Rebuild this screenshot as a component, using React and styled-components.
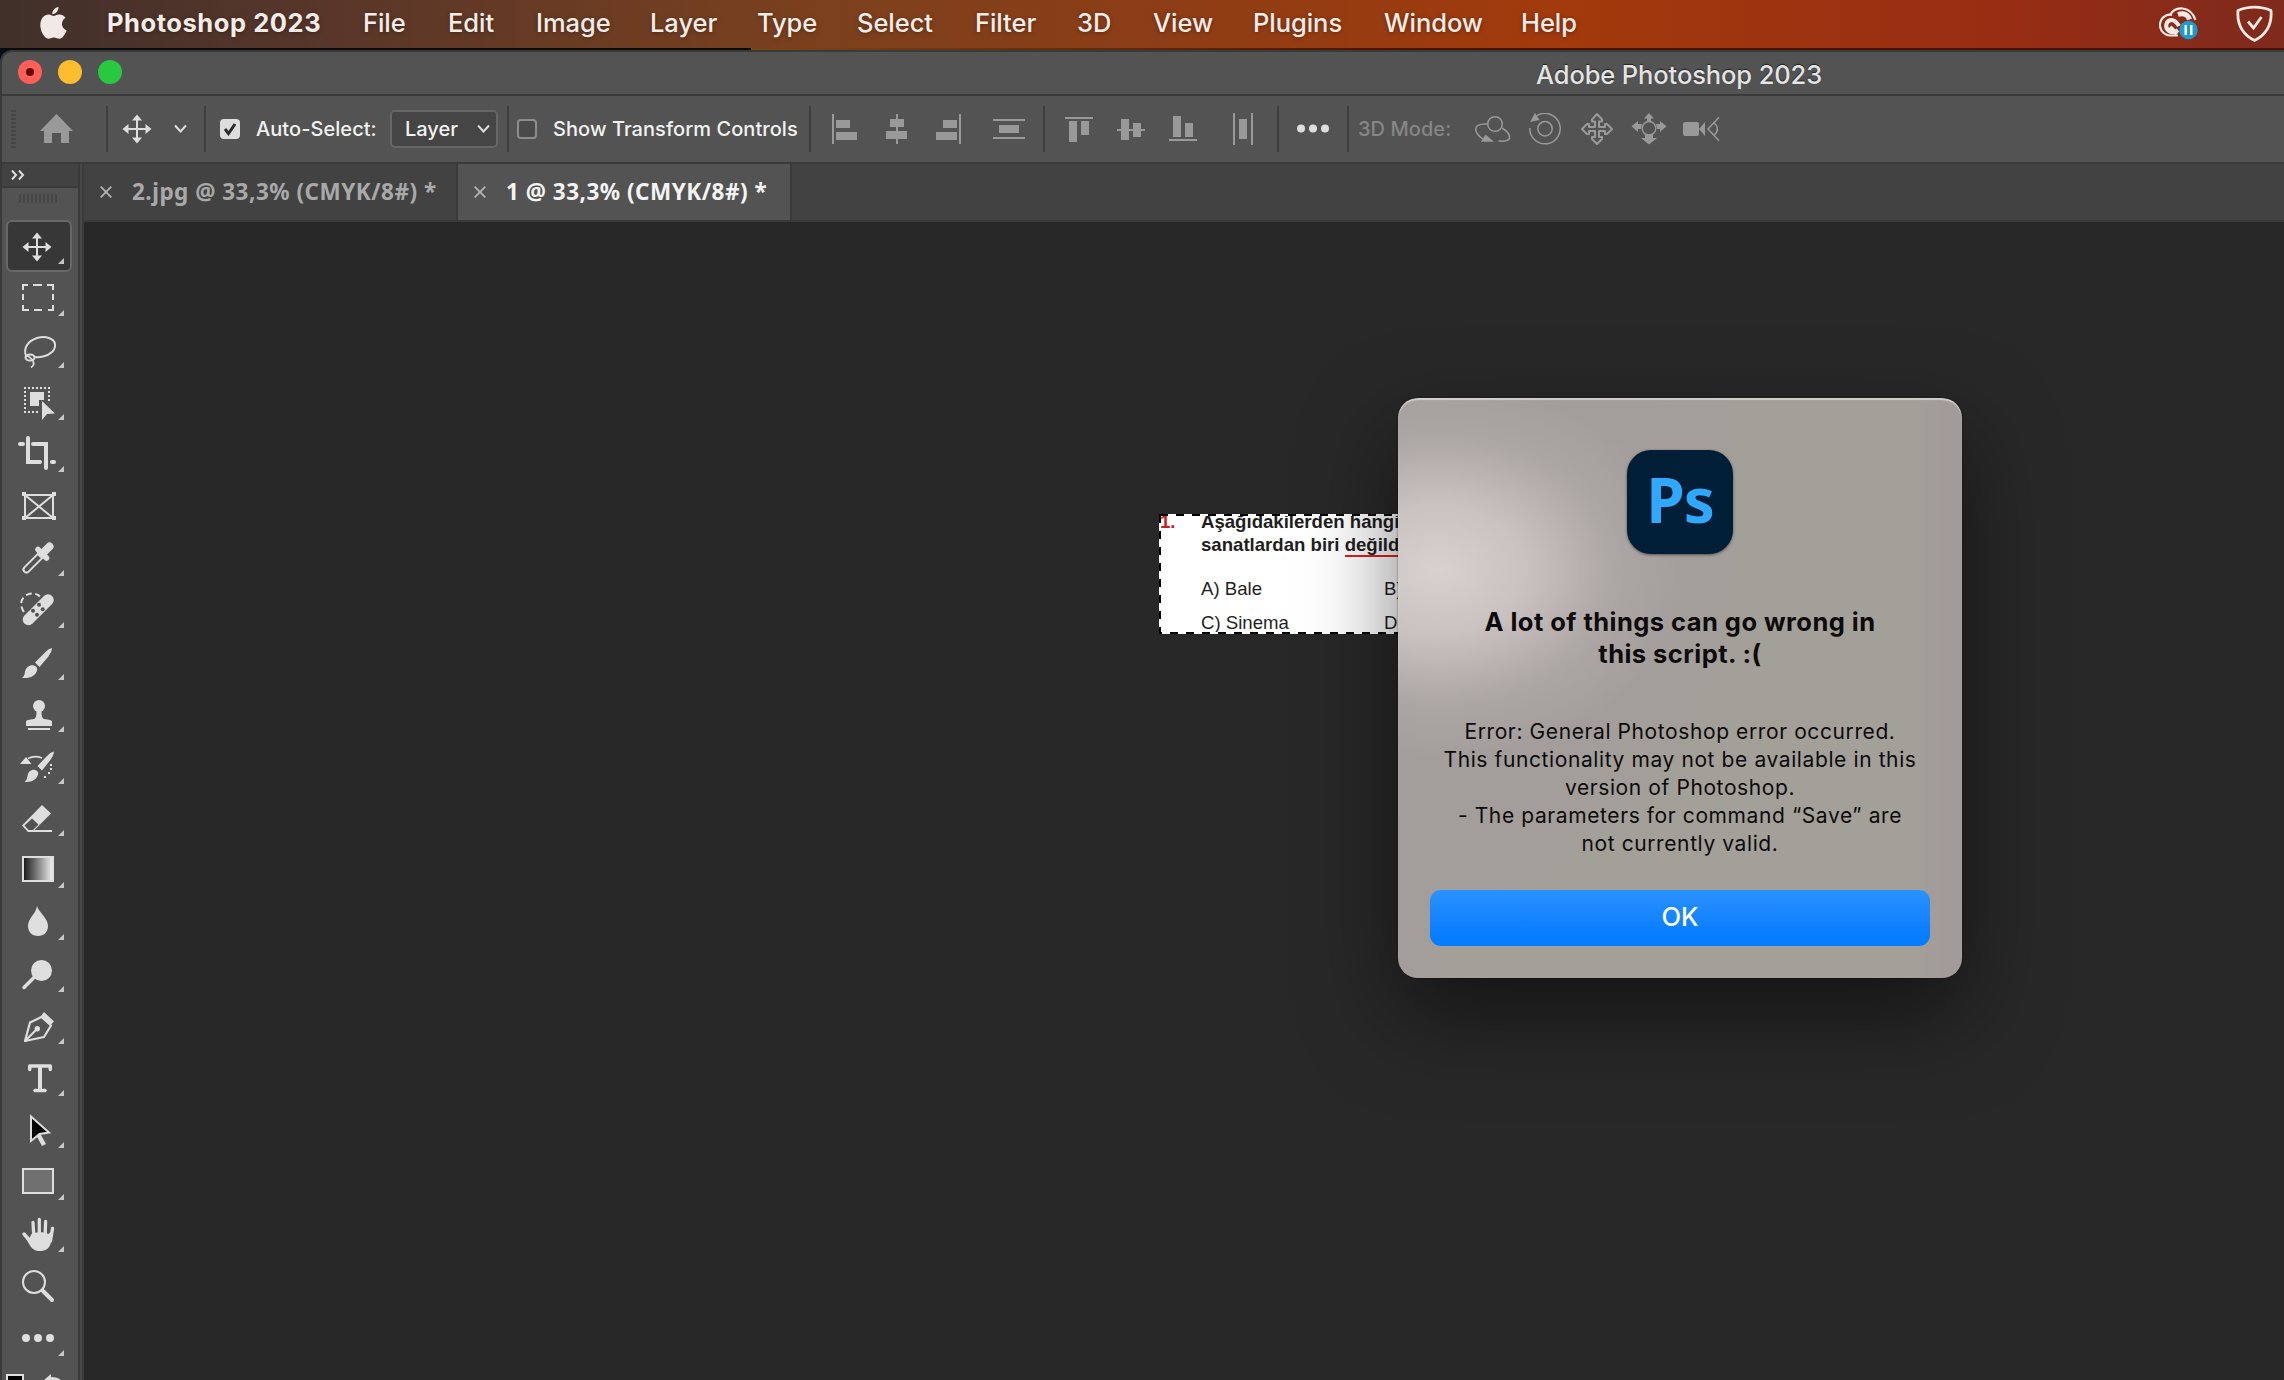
import styled, {createGlobalStyle} from 'styled-components';

const menuItems = [
  {label: 'Photoshop 2023', width: 214, bold: true},
  {label: 'File', width: 43},
  {label: 'Edit', width: 46},
  {label: 'Image', width: 72},
  {label: 'Layer', width: 65},
  {label: 'Type', width: 58},
  {label: 'Select', width: 76},
  {label: 'Filter', width: 60},
  {label: '3D', width: 34},
  {label: 'View', width: 58},
  {label: 'Plugins', width: 89},
  {label: 'Window', width: 95},
  {label: 'Help', width: 56},
];

const light = '#dedede';
const panel = '#535353';

const tools = [
  {
    name: 'move',
    active: true,
    icon: (
      <g>
        <path d="M37 16v22M26 27h22" stroke={light} strokeWidth="2" />
        <path d="M37 12.5l5 6H32zM37 41.5l5-6H32zM22.5 27l6-5v10zM51.5 27l-6-5v10z" fill={light} />
      </g>
    ),
  },
  {
    name: 'marquee',
    icon: (
      <path
        d="M23 18v-5h5M33 13h9M47 13h6v5M53 22v6M53 33v5h-5M42 38h-8M29 38h-6v-5M23 28v-6"
        fill="none"
        stroke={light}
        strokeWidth="2"
      />
    ),
  },
  {
    name: 'lasso',
    icon: (
      <g fill="none" stroke={light} strokeWidth="2">
        <path d="M26 32c-3-8 2-15 11-18 9-2.500 17 .5 18 6 1 6-5 11-12 12.500-3 .7-6 .8-8 .5" />
        <ellipse cx="30" cy="33.500" rx="4.500" ry="3" />
        <path d="M26 32c3 0 5 2 7 5 1.500 3 .5 5-2 6.500" strokeWidth="1.700" />
      </g>
    ),
  },
  {
    name: 'object-select',
    icon: (
      <g fill={light}>
        <path d="M24 12h27M24 36h16M25 15v20M49 15v12" stroke={light} strokeWidth="2" strokeDasharray="2 2" />
        <path d="M30 16h14v8l-5 0v6h-9z" />
        <path d="M42 25v19l5-6 8-.5z" />
      </g>
    ),
  },
  {
    name: 'crop',
    icon: (
      <g fill="none" stroke={light} strokeWidth="4" strokeLinecap="round">
        <path d="M20 16h3M28 10v24h12M33 16h13v24" />
        <path d="M52 34h2" />
      </g>
    ),
  },
  {
    name: 'frame',
    flat: true,
    icon: (
      <g stroke={light} strokeWidth="2" fill="none">
        <path d="M25 15h28v23H25zM25 15l28 23M53 15L25 38" />
        <path d="M22 12h4v4h-4zM52 12h4v4h-4zM22 36h4v4h-4zM52 36h4v4h-4z" fill={light} stroke="none" />
      </g>
    ),
  },
  {
    name: 'eyedropper',
    icon: (
      <g fill="none" strokeLinecap="round">
        <path d="M26.500 37.500L40 24" stroke={light} strokeWidth="8" />
        <path d="M26.500 37.500L40 24" stroke={panel} strokeWidth="4" />
        <path d="M42 22l7.500-7.500" stroke={light} strokeWidth="8" />
        <path d="M38 17.500l8.500 8.500" stroke={light} strokeWidth="5.500" />
      </g>
    ),
  },
  {
    name: 'healing',
    icon: (
      <g>
        <path d="M28.500 35.500L48 16" stroke={light} strokeWidth="11.500" strokeLinecap="round" />
        <path
          d="M24 28c-6-8-2-18 8-18.500 3 0 6 1 8 3"
          fill="none"
          stroke={light}
          strokeWidth="2"
          strokeDasharray="6 3.500"
        />
        <g fill={panel}>
          <circle cx="33" cy="26.700" r="2" />
          <circle cx="39" cy="20.700" r="2" />
          <circle cx="42.700" cy="25.200" r="2" />
          <circle cx="37" cy="30.700" r="2" />
        </g>
      </g>
    ),
  },
  {
    name: 'brush',
    icon: (
      <path
        d="M52 12c0 3-2 6-4 9l-8.500 10-4.500-4.500 9-9c3-3 5-5 8-5.500zM34 29.500c3 .8 4 3.500 2.500 6.500-2.500 5-8 6.500-14.500 6 2-1.500 2.500-3 3-6 .8-5 5-7.500 9-6.500z"
        fill={light}
      />
    ),
  },
  {
    name: 'stamp',
    icon: (
      <g fill={light}>
        <circle cx="39" cy="18" r="6" />
        <path d="M36.500 22h5c0 4 0 8 2.500 9 5 .5 8 1 8 3v4H26v-4c0-2 3-2.500 8-3 2.500-1 2.500-5 2.500-9z" />
        <path d="M28 40h22v2H28z" />
      </g>
    ),
  },
  {
    name: 'history-brush',
    icon: (
      <g fill={light}>
        <path d="M54 11.500c0 3-2 6-4 9l-8 10-4.500-4.500 8.500-9c3-3 5-5 8-5.500zM35 30c3 .5 4 3.500 2.500 6-2.500 5-7 6-13 6 2-1.500 2.500-3 3-6 .8-4.500 4-6.800 7.500-6z" />
        <path d="M20 24h11.500l-5.500-7z" />
        <path d="M28 18.500c4-2 9-2.500 14-.5" fill="none" stroke={light} strokeWidth="1.700" />
        <path d="M50 24h2v2h-2zM50 28h2v2h-2zM48 32h2v2h-2zM44 36h2v2h-2z" />
      </g>
    ),
  },
  {
    name: 'eraser',
    icon: (
      <g>
        <path d="M42 13l9 8.500L34.500 38H52v2H28l-6-6.500z" fill={light} />
        <path d="M32 26.500l6.500 6-5.500 5.500h-4.500l-4-4.500z" fill={panel} />
      </g>
    ),
  },
  {
    name: 'gradient',
    icon: (
      <g>
        <defs>
          <linearGradient id="ramp">
            <stop offset="0" stopColor="#151515" />
            <stop offset="1" stopColor="#f2f2f2" />
          </linearGradient>
        </defs>
        <rect x="23" y="13" width="30" height="24" fill="url(#ramp)" stroke={light} strokeWidth="2" />
      </g>
    ),
  },
  {
    name: 'blur',
    icon: <path d="M37 10c1.500 6 11 12 11 20 0 6-4 10-10 10s-10-4-10-10c0-8 8-12 9-20z" fill={light} />,
  },
  {
    name: 'dodge',
    icon: (
      <g>
        <circle cx="41.500" cy="22.500" r="10.500" fill={light} />
        <path d="M24 39.500l12-12" stroke={light} strokeWidth="3.500" strokeLinecap="round" />
      </g>
    ),
  },
  {
    name: 'pen',
    icon: (
      <g fill="none" stroke={light} strokeWidth="2.200" strokeLinejoin="round">
        <path d="M25 41l5-18.500L41.500 17l9.500 8.500L44 37z" />
        <path d="M25 41l12-12" />
        <circle cx="37.300" cy="28.700" r="2.700" fill={light} stroke="none" />
        <path d="M44 12l10 9.500-4 4L40.500 16.500z" fill={light} stroke="none" />
      </g>
    ),
  },
  {
    name: 'type',
    icon: (
      <g fill="none" stroke={light} strokeWidth="4" strokeLinecap="round" strokeLinejoin="round">
        <path d="M29.700 17.500V14h20.600v3.500" strokeWidth="3.500" />
        <path d="M40 14v24" strokeLinecap="butt" />
        <path d="M35 38.500h10" strokeWidth="3.500" />
      </g>
    ),
  },
  {
    name: 'path-select',
    icon: (
      <g>
        <path d="M38.500 31l5.500 10" stroke={light} strokeWidth="4.500" />
        <path d="M31 12.500L49 28.500l-9.500 1.500L31 37z" fill="#000" stroke={light} strokeWidth="2" />
      </g>
    ),
  },
  {
    name: 'rectangle',
    icon: <rect x="23" y="13" width="30" height="24" fill="#707070" stroke={light} strokeWidth="2" />,
  },
  {
    name: 'hand',
    icon: (
      <g stroke={light} strokeLinecap="round" fill="none">
        <path d="M33 14.500l1 17M39.300 11.500V30M45.600 13.500L45 31M52.500 20.500L50.500 33" strokeWidth="3.300" />
        <path d="M24 26l7 8" strokeWidth="3.500" />
        <path
          d="M31.500 26c5-2.500 12-2.500 17 0l4-4c0 6-.5 10-2 14-1.500 4.500-5 7-10.500 7-5 0-8-2-10-5.500L25 29l4 2z"
          fill={light}
          stroke="none"
        />
      </g>
    ),
  },
  {
    name: 'zoom',
    flat: true,
    icon: (
      <g fill="none" stroke={light}>
        <circle cx="34" cy="22" r="11" strokeWidth="2" />
        <path d="M42.500 30.500l9.500 9.500" strokeWidth="4" strokeLinecap="round" />
      </g>
    ),
  },
  {
    name: 'more',
    icon: (
      <g fill={light}>
        <circle cx="26" cy="26" r="4" />
        <circle cx="38" cy="26" r="4" />
        <circle cx="50" cy="26" r="4" />
      </g>
    ),
  },
];

const alignIcons = {
  left: {gap: 21, width: 26, d: 'M0 1h2v30H0zM4 7h14v8H4zM4 19h21v8H4z'},
  centerH: {gap: 28, width: 21, d: 'M10 1h2v30h-2zM4 6h14v8H4zM0 18h21v8H0z'},
  right: {gap: 29, width: 25, d: 'M23 1h2v30h-2zM7 7h14v8H7zM0 19h21v8H0z'},
  distributeV: {gap: 32, width: 32, d: 'M0 6h32v2H0zM6 12h20v8H6zM0 24h32v2H0z'},
  top: {gap: 20, width: 28, d: 'M0 4h28v2H0zM4 8h8v21H4zM16 8h8v14h-8z'},
  middle: {gap: 24, width: 28, d: 'M0 16h28v2H0zM4 6h8v21H4zM16 10h8v14h-8z'},
  bottom: {gap: 24, width: 28, d: 'M0 26h28v2H0zM4 3h8v21H4zM16 10h8v14h-8z'},
  distributeH: {gap: 36, width: 20, d: 'M0 0h2v32H0zM6 6h8v20H6zM18 0h2v32h-2z'},
};

const modeIcons = [
  {
    name: 'orbit',
    gap: 24,
    width: 38,
    icon: (
      <g>
        <circle cx="21" cy="11" r="7.300" />
        <path d="M13.500 11C5 10.500.5 13 2 18c1 3.500 4 6 7 8M28 15c5 3 8 6.500 7.500 10-.5 2.500-5 3.500-11 3" />
        <path d="M7 28.700L11.500 21.500 20 28.700z" fill="#999" stroke="none" />
      </g>
    ),
  },
  {
    name: 'roll',
    gap: 17,
    width: 34,
    icon: (
      <g>
        <path d="M.8 15A15.200 15.200 0 1 0 8 2.700" />
        <circle cx="16" cy="15.700" r="7.200" />
        <path d="M6 0l4.500 7-9.500 2z" fill="#999" stroke="none" />
      </g>
    ),
  },
  {
    name: 'pan',
    gap: 18,
    width: 32,
    icon: (
      <path
        d="M16 1l5 5.500v2h-3V14h6v-3h2l5 5-5 5h-2v-3h-6v6h3v2l-5 5-5-5v-2h3v-6H8v3H6l-5-5 5-5h2v3h6V8.500h-3v-2z"
        strokeWidth="2"
        strokeLinejoin="round"
      />
    ),
  },
  {
    name: 'slide',
    gap: 18,
    width: 36,
    icon: (
      <g>
        <circle cx="18" cy="15.300" r="6.800" />
        <path
          d="M18 0l5 5.500h-3V8h-4V5.500h-3zM.5 13.300L7 8v3h4l-1 5H7v3zM35.500 13.300L29 8v3h-4l1 5h3v3zM18 31.500L10 25h4v-3.500h8V25h4z"
          fill="#999"
          stroke="none"
        />
      </g>
    ),
  },
  {
    name: 'camera',
    gap: 16,
    width: 37,
    icon: (
      <g>
        <rect x="0" y="9" width="16" height="14" rx="2" fill="#999" stroke="none" />
        <path d="M16 16l6-7v14z" fill="#999" stroke="none" />
        <path d="M36 4.300L25 16l11 11.700M31 10c4.500 3 4.500 9 0 12" />
      </g>
    ),
  },
];

const errorLines = [
  'Error: General Photoshop error occurred.',
  'This functionality may not be available in this',
  'version of Photoshop.',
  '- The parameters for command “Save” are',
  'not currently valid.',
];

function AlignIcon({type}) {
  const {gap, width, d} = alignIcons[type];
  return (
    <OptionIcon $gap={gap} width={width} height="32" viewBox={`0 0 ${width} 32`}>
      <path d={d} fill="#999" />
    </OptionIcon>
  );
}

function Chevron({gap}) {
  return (
    <OptionIcon $gap={gap} width="13" height="10" viewBox="0 0 13 10">
      <path d="M1 1.500l5.500 6 5.500-6" fill="none" stroke={light} strokeWidth="2" />
    </OptionIcon>
  );
}

function OptionsBar() {
  return (
    <StyledOptions>
      <Gripper />
      <OptionIcon $gap={24} width="33" height="30" viewBox="0 0 33 30">
        <path d="M16.500 0L33 17h-4v12h-8V19h-9v10H4V17H0z" fill="#999" />
      </OptionIcon>
      <Separator $gap={33} />
      <OptionIcon $gap={14} width="30" height="30" viewBox="0 0 30 30">
        <path d="M15 4v22M4 15h22" stroke={light} strokeWidth="2" />
        <path d="M15 .5l5 6H10zM15 29.500l5-6H10zM.5 15l6-5v10zM29.500 15l-6-5v10z" fill={light} />
      </OptionIcon>
      <Chevron gap={22} />
      <Separator $gap={17} />
      <Checkbox $gap={14} $checked>
        <svg width="14" height="14" viewBox="0 0 14 14">
          <path d="M2 7l3.500 4.500L12 2" fill="none" stroke="#2b2b2b" strokeWidth="3" />
        </svg>
      </Checkbox>
      <OptionLabel $gap={16} $width={121}>
        Auto-Select:
      </OptionLabel>
      <LayerSelect>
        <span>Layer</span>
        <Chevron gap={0} />
      </LayerSelect>
      <Separator $gap={9} />
      <Checkbox $gap={8} />
      <OptionLabel $gap={16} $width={244}>
        Show Transform Controls
      </OptionLabel>
      <Separator $gap={12} />
      <AlignIcon type="left" />
      <AlignIcon type="centerH" />
      <AlignIcon type="right" />
      <AlignIcon type="distributeV" />
      <Separator $gap={18} />
      <AlignIcon type="top" />
      <AlignIcon type="middle" />
      <AlignIcon type="bottom" />
      <AlignIcon type="distributeH" />
      <Separator $gap={24} />
      <OptionIcon $gap={18} width="32" height="10" viewBox="0 0 32 10">
        <g fill={light}>
          <circle cx="4" cy="4.500" r="4" />
          <circle cx="16" cy="4.500" r="4" />
          <circle cx="28" cy="4.500" r="4" />
        </g>
      </OptionIcon>
      <Separator $gap={18} />
      <OptionLabel $gap={9} $width={92} $muted>
        3D Mode:
      </OptionLabel>
      {modeIcons.map(({name, gap, width, icon}) => (
        <OptionIcon key={name} $gap={gap} width={width} height="32" viewBox={`0 0 ${width} 32`}>
          <g fill="none" stroke="#999" strokeWidth="1.500">
            {icon}
          </g>
        </OptionIcon>
      ))}
    </StyledOptions>
  );
}

function MenuBar() {
  return (
    <StyledMenuBar>
      <AppleLogo width="27" height="32" viewBox="0 0 27 32">
        <path
          d="M18.500 0c.3 3.500-2.700 7.300-6.200 7.200C12 3.800 15 .3 18.500 0zM13.500 9c1.300 0 3-1.500 5.800-1.500 2.400 0 4.800 1.200 6.300 3.300-5.300 3-4.500 10.500 1 12.600-1.300 3.700-4.300 8.300-7.200 8.300-2.200 0-3-1.300-5.600-1.300-2.700 0-3.600 1.300-5.600 1.300C4.700 31.700.3 24.500.3 18.300.3 11.600 4.500 7.600 8.600 7.600c2.300 0 3.700 1.400 4.900 1.400z"
          fill="#f0e9e6"
        />
      </AppleLogo>
      {menuItems.map(({label, width, bold}) => (
        <MenuItem key={label} $width={width} $bold={bold}>
          {label}
        </MenuItem>
      ))}
      <StatusIcons>
        <svg width="40" height="34" viewBox="0 0 40 34">
          <g fill="none" stroke="#fbe9e4">
            <path d="M20 29.500H12A10.500 10.500 0 0 1 8 9.500c2-1 4-1 6-.5M12 9C17 0 32-1 37.500 14" strokeWidth="2.200" />
            <path d="M20 24c-3 2.500-6 3-9 1-4.500-3-3.500-10 2-11 4-.5 6 3 8 6M19 28l-7-7" strokeWidth="4" />
            <path d="M20 8.500c6-2 10 .5 11.500 5" strokeWidth="5" />
          </g>
          <circle cx="30.500" cy="24" r="9.200" fill="#1b9ccf" />
          <path d="M26.500 19h2.500v10h-2.500zM32 19h2.500v10H32z" fill="#fff" />
        </svg>
        <svg width="37" height="37" viewBox="0 0 37 37">
          <path
            d="M2 5.500C12 1 25 1 35 5.500c1 12-3 23-16.500 30C5 28.500 1 17.500 2 5.500z"
            fill="none"
            stroke="#fbe9e4"
            strokeWidth="2.800"
            strokeLinejoin="round"
          />
          <path d="M12 16.500l5.500 6.500 8-11" fill="none" stroke="#fbe9e4" strokeWidth="2.800" />
        </svg>
      </StatusIcons>
    </StyledMenuBar>
  );
}

function Toolbar() {
  return (
    <StyledToolbar>
      <ToolbarHeader>
        <svg width="14" height="10" viewBox="0 0 14 10">
          <path d="M1 .5L5 5 1 9.500M8 .5L12 5 8 9.500" fill="none" stroke={light} strokeWidth="2" />
        </svg>
      </ToolbarHeader>
      <ToolbarGrip />
      {tools.map(({name, icon, active, flat}) => (
        <Tool key={name} $active={active}>
          <svg width="76" height="52" viewBox="2 0 76 52">
            {icon}
            {!flat && <path d="M64 38v6h-6z" fill="#c8c8c8" />}
          </svg>
        </Tool>
      ))}
      <Swatches>
        <Swatch />
        <svg width="18" height="8" viewBox="0 0 18 8">
          <path d="M0 6l7-6v3c6 0 10 2 11 5H7z" fill={light} />
        </svg>
      </Swatches>
    </StyledToolbar>
  );
}

function CloseIcon() {
  return (
    <svg width="12" height="12" viewBox="0 0 12 12">
      <path d="M.7.7l10.600 10.600M11.300.7L.7 11.300" stroke="#b4b4b4" strokeWidth="1.800" />
    </svg>
  );
}

function Document() {
  return (
    <StyledDocument>
      <QuestionNumber>1.</QuestionNumber>
      <Question>
        Aşağıdakilerden hangi
        <br />
        sanatlardan biri <u>değildir?</u>
      </Question>
      <Answers>
        <span>A) Bale</span>
        <span>B)</span>
        <span>C) Sinema</span>
        <span>D)</span>
      </Answers>
      <Ants viewBox="0 0 560 120" width="560" height="120">
        <rect x="1" y="1" width="558" height="118" />
        <rect x="1" y="1" width="558" height="118" strokeDasharray="8 8" />
      </Ants>
    </StyledDocument>
  );
}

function ErrorDialog() {
  return (
    <StyledDialog role="alertdialog">
      <AppIcon>Ps</AppIcon>
      <DialogTitle>
        A lot of things can go wrong in
        <br />
        this script. :(
      </DialogTitle>
      <DialogText>
        {errorLines.map(line => (
          <p key={line}>{line}</p>
        ))}
      </DialogText>
      <OkButton>OK</OkButton>
    </StyledDialog>
  );
}

export default function App() {
  return (
    <Screen>
      <GlobalStyle />
      <MenuBar />
      <AppWindow>
        <TitleBar>
          <TrafficLight $color="#ff5f57">
            <i />
          </TrafficLight>
          <TrafficLight $color="#febc2e" />
          <TrafficLight $color="#28c840" />
          <WindowTitle>Adobe Photoshop 2023</WindowTitle>
        </TitleBar>
        <OptionsBar />
        <Workspace>
          <Toolbar />
          <Main>
            <Tabs>
              <Tab $width={374}>
                <CloseIcon />
                <span>2.jpg @ 33,3% (CMYK/8#) *</span>
              </Tab>
              <Tab $width={334} $active>
                <CloseIcon />
                <span>1 @ 33,3% (CMYK/8#) *</span>
              </Tab>
            </Tabs>
            <Canvas>
              <Document />
            </Canvas>
          </Main>
        </Workspace>
      </AppWindow>
      <ErrorDialog />
    </Screen>
  );
}

const GlobalStyle = createGlobalStyle`
  *,
  *::before {
    box-sizing: border-box;
  }
  body {
    margin: 0;
    background: #282828;
    font-family: Inter, 'Liberation Sans', sans-serif;
  }
  svg {
    display: block;
    flex: none;
  }
`;

const Screen = styled.div`
  position: relative;
  display: flex;
  flex-direction: column;
  width: 2284px;
  height: 1380px;
  overflow: hidden;
  background: #04101c;
`;

const StyledMenuBar = styled.nav`
  display: flex;
  align-items: center;
  flex: none;
  height: 50px;
  padding: 0 11px 2px 40px;
  background: linear-gradient(90deg, #40302a 0, #55352a 280px, #7a401e 800px, #a23a0c 1560px, #982d13 2000px, #7e2a1d 2284px);
  border-bottom: 2px solid;
  border-image: linear-gradient(90deg, #0a0a0c 751px, #7a4513 751px, #4d1206 1400px, #4a0f08) 1;
`;

const AppleLogo = styled.svg`
  margin-right: 40px;
`;

const MenuItem = styled.span`
  flex: none;
  width: ${({$width}) => $width}px;
  margin-right: 42px;
  color: #f6ece8;
  font-size: 25.5px;
  font-weight: ${({$bold}) => ($bold ? 700 : 500)};
  letter-spacing: ${({$bold}) => ($bold ? 0.55 : -0.05)}px;
  line-height: 44px;
  white-space: nowrap;
  text-shadow: 0 1px 4px rgba(0, 0, 0, 0.35);
`;

const StatusIcons = styled.div`
  display: flex;
  align-items: center;
  gap: 38px;
  margin-left: auto;
`;

const AppWindow = styled.div`
  display: flex;
  flex-direction: column;
  flex: 1;
  min-height: 0;
  border: 2px solid #3a3a3a;
  border-width: 2px 0 0 2px;
  border-top-left-radius: 12px;
  overflow: hidden;
  background: #3a3a3a;
`;

const TitleBar = styled.header`
  display: flex;
  align-items: center;
  gap: 16px;
  height: 44px;
  padding: 0 0 3px 16px;
  background: ${panel};
  border-bottom: 2px solid #3a3a3a;
`;

const TrafficLight = styled.span`
  display: grid;
  place-items: center;
  width: 24px;
  height: 24px;
  border-radius: 50%;
  background: ${({$color}) => $color};
  i {
    width: 8px;
    height: 8px;
    border-radius: 50%;
    background: #6b0200;
  }
`;

const WindowTitle = styled.span`
  margin: 6px 0 0 1398px;
  color: #e4e4e4;
  font-size: 25.5px;
  font-weight: 500;
  letter-spacing: -0.12px;
  white-space: nowrap;
  text-shadow: 0 -1px 1px rgba(0, 0, 0, 0.6);
`;

const StyledOptions = styled.div`
  display: flex;
  align-items: center;
  height: 68px;
  background: ${panel};
  border-bottom: 2px solid #3a3a3a;
`;

const Gripper = styled.span`
  width: 5px;
  height: 38px;
  margin-left: 9px;
  background: repeating-linear-gradient(#464646 0 2px, transparent 2px 4px);
`;

const OptionIcon = styled.svg`
  margin-left: ${({$gap}) => $gap}px;
`;

const Separator = styled.span`
  width: 2px;
  height: 46px;
  margin-left: ${({$gap}) => $gap}px;
  background: #3e3e3e;
`;

const Checkbox = styled.span`
  display: grid;
  place-items: center;
  width: 20px;
  height: 20px;
  margin-left: ${({$gap}) => $gap}px;
  border: 2px solid ${({$checked}) => ($checked ? light : '#8c8c8c')};
  border-radius: 4px;
  background: ${({$checked}) => ($checked ? light : '#4a4a4a')};
`;

const OptionLabel = styled.span`
  width: ${({$width}) => $width}px;
  margin-left: ${({$gap}) => $gap}px;
  color: ${({$muted}) => ($muted ? '#868686' : '#f2f2f2')};
  font-size: 20px;
  font-weight: 500;
  letter-spacing: 0.06px;
  white-space: nowrap;
`;

const LayerSelect = styled.div`
  display: flex;
  align-items: center;
  justify-content: space-between;
  width: 108px;
  height: 38px;
  margin-left: 13px;
  padding: 0 6px 0 13px;
  border: 2px solid #666;
  border-radius: 5px;
  background: #454545;
  color: #f2f2f2;
  font-size: 20px;
  font-weight: 500;
`;

const Workspace = styled.div`
  display: flex;
  flex: 1;
  min-height: 0;
`;

const StyledToolbar = styled.aside`
  display: flex;
  flex-direction: column;
  flex: none;
  width: 82px;
  border-right: 2px solid #3a3a3a;
  background: linear-gradient(90deg, ${panel} 76px, #3a3a3a 76px 78px, #474747 78px);
  overflow: hidden;
`;

const ToolbarHeader = styled.div`
  display: flex;
  align-items: center;
  flex: none;
  width: 76px;
  height: 24px;
  padding: 0 0 1px 9px;
  background: #424242;
  border-bottom: 2px solid #3a3a3a;
`;

const ToolbarGrip = styled.div`
  flex: none;
  width: 39px;
  height: 9px;
  margin: 6px 0 17px 17px;
  background: repeating-linear-gradient(90deg, #464646 0 2px, transparent 2px 4px);
`;

const Tool = styled.div`
  display: grid;
  flex: none;
  width: 76px;
  height: 52px;
  svg {
    grid-area: 1 / 1;
    z-index: 1;
  }
  &::before {
    content: '';
    grid-area: 1 / 1;
    width: 66px;
    margin-left: 4px;
    border-radius: 6px;
    border: 2px solid ${({$active}) => ($active ? '#686868' : 'transparent')};
    background: ${({$active}) => ($active ? '#373737' : 'transparent')};
  }
`;

const Swatches = styled.div`
  display: flex;
  align-items: flex-start;
  gap: 20px;
  margin: 10px 0 0 4px;
`;

const Swatch = styled.span`
  width: 18px;
  height: 18px;
  border: 2px solid ${light};
  background: #000;
`;

const Main = styled.main`
  display: flex;
  flex-direction: column;
  flex: 1;
  min-width: 0;
`;

const Tabs = styled.div`
  display: flex;
  flex: none;
  height: 58px;
  background: #424242;
  border-bottom: 2px solid #3a3a3a;
`;

const Tab = styled.div`
  display: flex;
  align-items: center;
  gap: 20px;
  width: ${({$width}) => $width}px;
  padding: 0 0 1px 16px;
  border-right: 2px solid #3a3a3a;
  background: ${({$active}) => ($active ? panel : '#424242')};
  color: ${({$active}) => ($active ? '#f4f4f4' : '#a9a9a9')};
  font-family: 'Noto Sans', sans-serif;
  font-size: 22.5px;
  font-weight: 700;
  letter-spacing: 0.5px;
  white-space: nowrap;
`;

const Canvas = styled.section`
  flex: 1;
  padding: 292px 0 0 1075px;
  background: #282828;
`;

const StyledDocument = styled.article`
  position: relative;
  display: grid;
  grid-template-columns: 42px 1fr;
  grid-template-rows: 48px 1fr;
  width: 560px;
  height: 120px;
  background: #fff;
  color: #1f1f1f;
  font-family: 'Liberation Sans', Arial, sans-serif;
  font-size: 18.6px;
`;

const QuestionNumber = styled.b`
  margin-top: -4px;
  padding-left: 1px;
  line-height: 23px;
  color: #d01c1c;
`;

const Question = styled.b`
  margin-top: -4px;
  line-height: 23px;
  white-space: nowrap;
  u {
    text-decoration: none;
    border-bottom: 2px solid #e0201c;
  }
`;

const Answers = styled.div`
  grid-column: 2;
  display: grid;
  grid-template-columns: 183px 1fr;
  grid-auto-rows: 34px;
  padding-top: 10px;
  line-height: 34px;
`;

const Ants = styled.svg`
  position: absolute;
  inset: 0;
  rect {
    fill: none;
    stroke: #fff;
    stroke-width: 2;
  }
  rect + rect {
    stroke: #000;
  }
`;

const StyledDialog = styled.div`
  position: absolute;
  left: 1398px;
  top: 398px;
  display: flex;
  flex-direction: column;
  align-items: center;
  width: 564px;
  height: 580px;
  padding-top: 52px;
  border-radius: 20px;
  background:
    radial-gradient(ellipse 250px 190px at 40px 172px, #d9d1d0 0, rgba(211, 203, 202, 0.8) 35%, rgba(190, 183, 182, 0.35) 70%, rgba(163, 157, 155, 0) 100%),
    radial-gradient(ellipse 370px 420px at 0 120px, #a39d9c 60%, rgba(163, 157, 156, 0) 100%),
    linear-gradient(90deg, #a39c9b 0, #a39f99 50px, #a3a099 510px, #a29b9a 545px);
  box-shadow:
    inset 0 2px 1px rgba(255, 255, 255, 0.5),
    0 0 2px rgba(0, 0, 0, 0.6),
    0 36px 90px rgba(0, 0, 0, 0.5);
  color: #0c0a0a;
  text-align: center;
`;

const AppIcon = styled.div`
  flex: none;
  width: 106px;
  height: 104px;
  border-radius: 24px;
  background: #001e36;
  box-shadow: 0 1px 3px rgba(0, 0, 0, 0.5);
  color: #31a8ff;
  font-family: 'Noto Sans', sans-serif;
  font-size: 62px;
  font-weight: 700;
  letter-spacing: -1px;
  line-height: 98px;
`;

const DialogTitle = styled.h1`
  margin: 52px 0 0;
  font-size: 25.5px;
  font-weight: 700;
  letter-spacing: 0.45px;
  line-height: 32px;
  white-space: nowrap;
`;

const DialogText = styled.div`
  margin-top: 48px;
  font-size: 21px;
  letter-spacing: 0.6px;
  line-height: 28px;
  white-space: nowrap;
  p {
    margin: 0;
  }
`;

const OkButton = styled.button`
  width: 500px;
  height: 56px;
  margin-top: 32px;
  padding: 0 0 3px;
  border: 0;
  border-radius: 11px;
  background: linear-gradient(#2b91ff, #067cff 85%);
  color: #fff;
  font-family: inherit;
  font-size: 25.5px;
  font-weight: 500;
`;
